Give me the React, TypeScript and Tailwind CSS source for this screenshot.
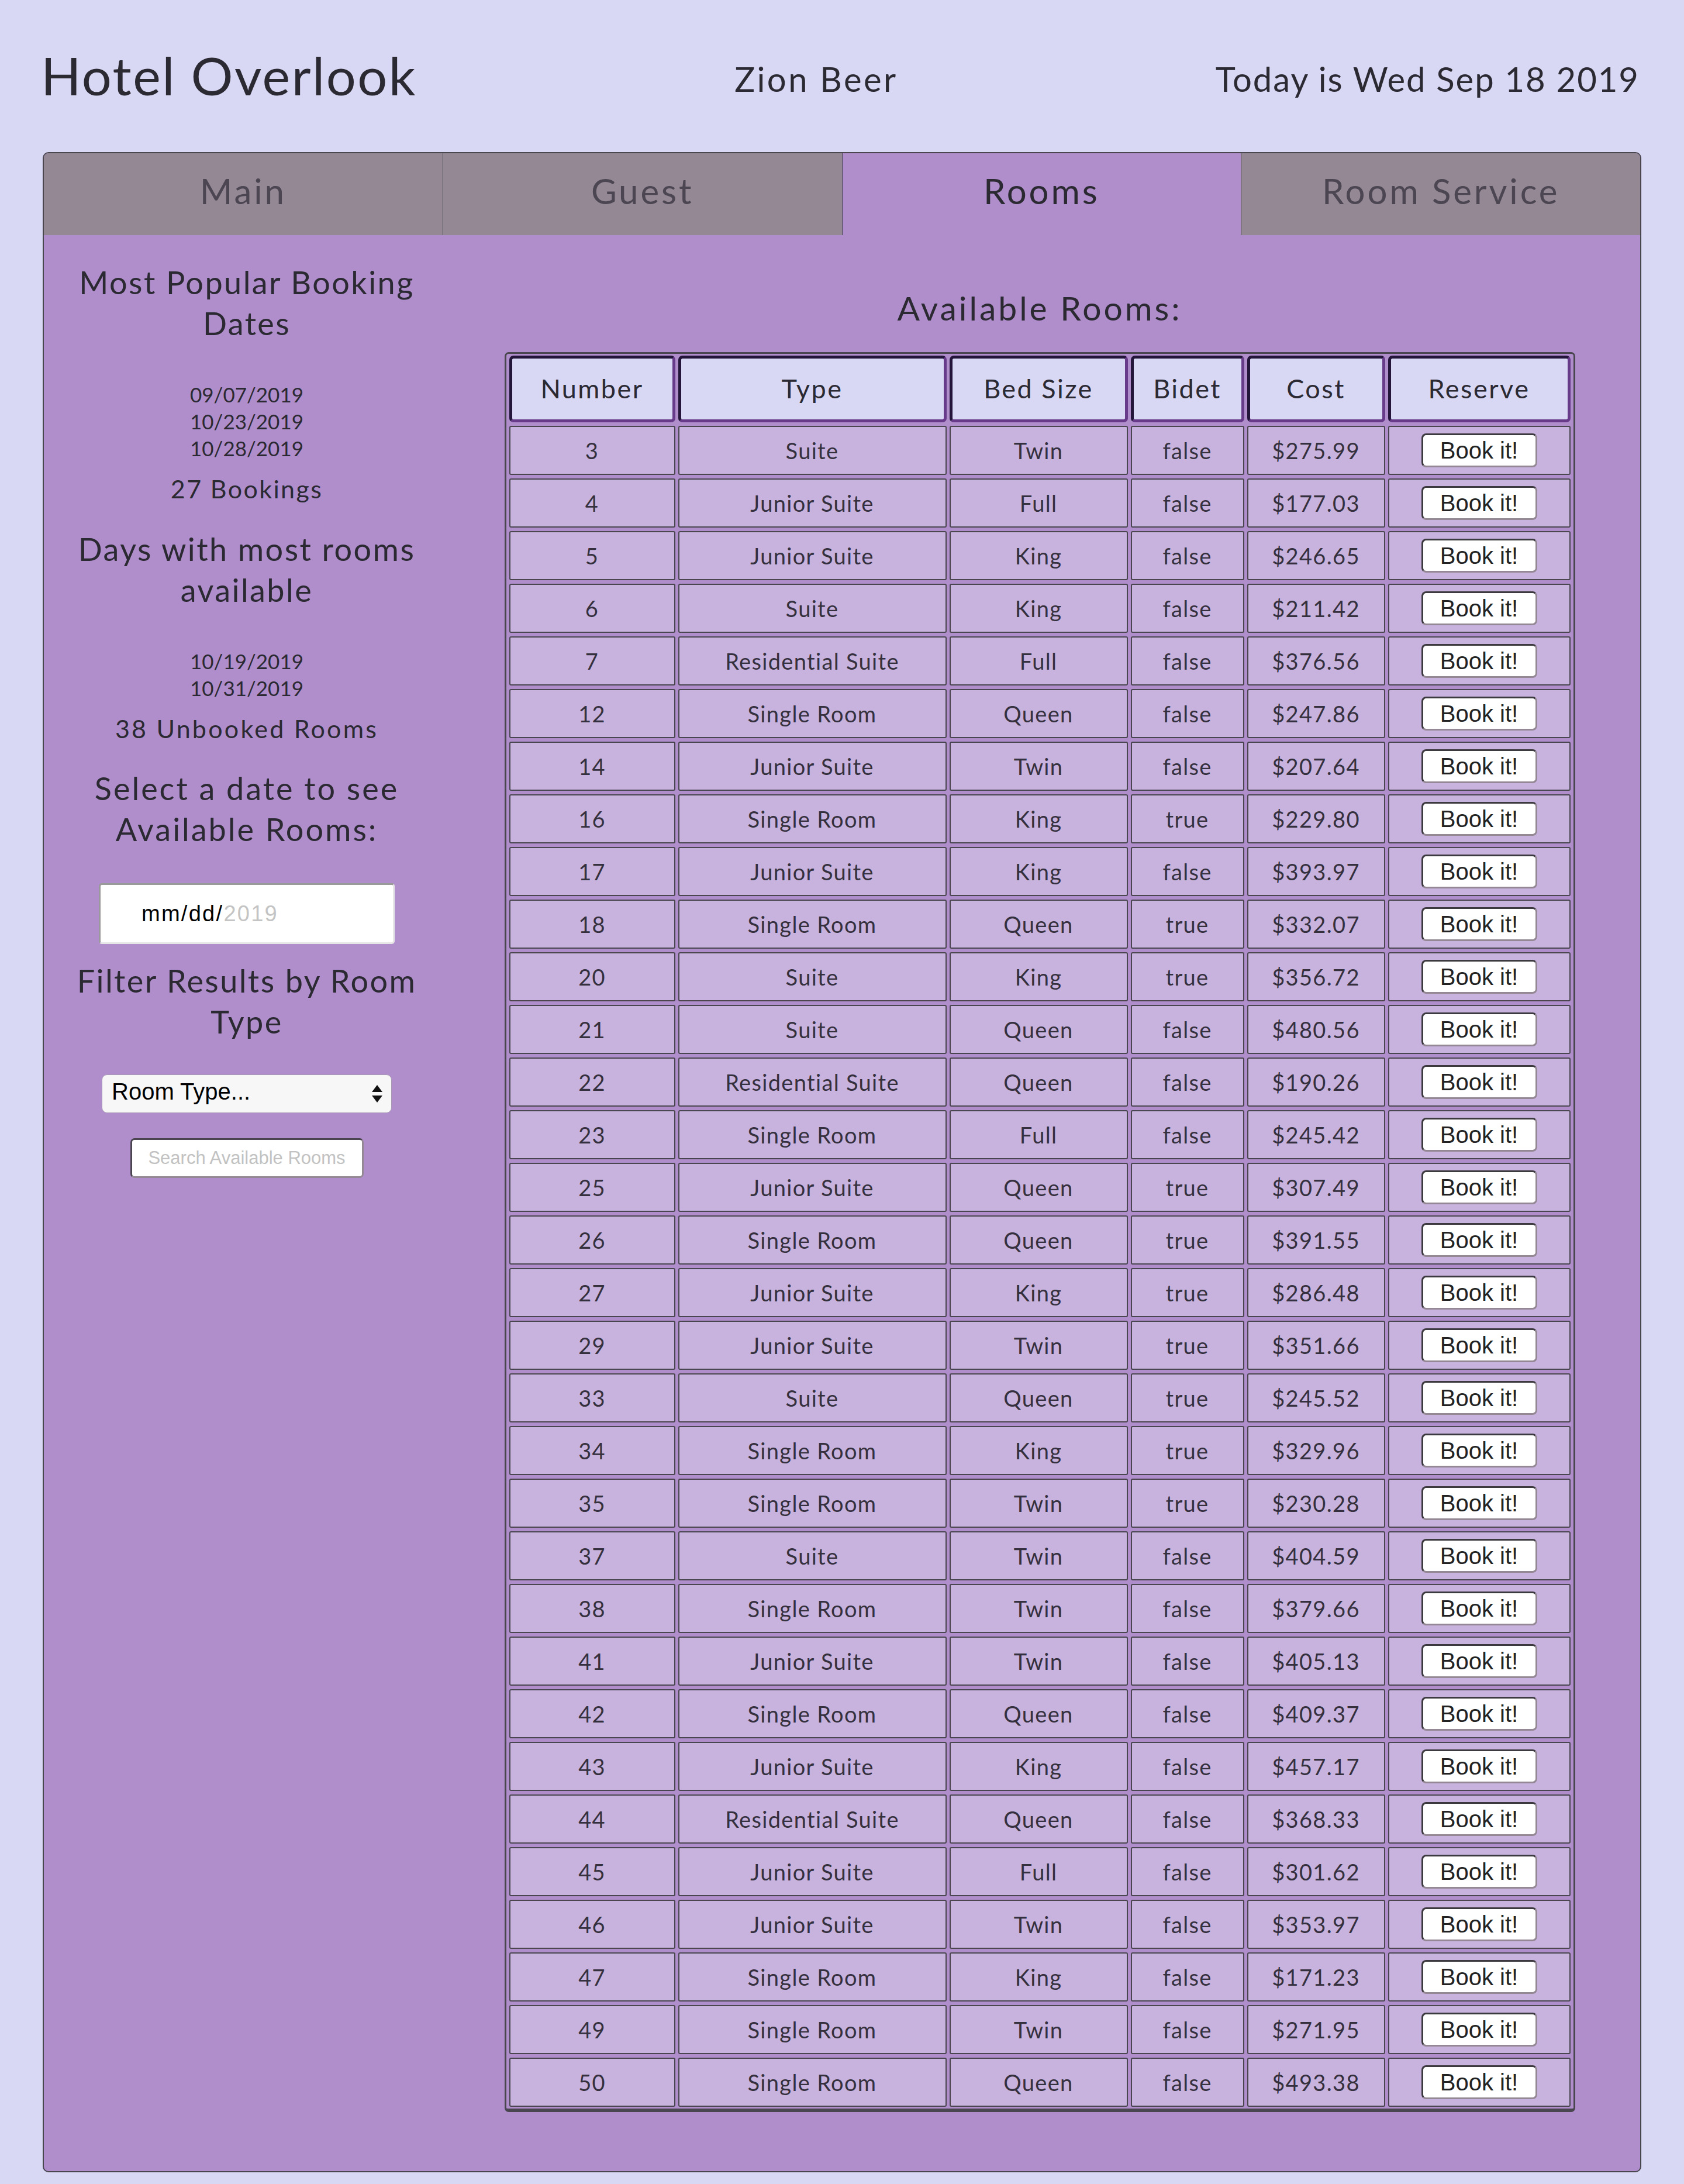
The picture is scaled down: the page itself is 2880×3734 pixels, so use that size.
const rooms = [
  [3, "Suite", "Twin", false, 275.99],
  [4, "Junior Suite", "Full", false, 177.03],
  [5, "Junior Suite", "King", false, 246.65],
  [6, "Suite", "King", false, 211.42],
  [7, "Residential Suite", "Full", false, 376.56],
  [12, "Single Room", "Queen", false, 247.86],
  [14, "Junior Suite", "Twin", false, 207.64],
  [16, "Single Room", "King", true, 229.8],
  [17, "Junior Suite", "King", false, 393.97],
  [18, "Single Room", "Queen", true, 332.07],
  [20, "Suite", "King", true, 356.72],
  [21, "Suite", "Queen", false, 480.56],
  [22, "Residential Suite", "Queen", false, 190.26],
  [23, "Single Room", "Full", false, 245.42],
  [25, "Junior Suite", "Queen", true, 307.49],
  [26, "Single Room", "Queen", true, 391.55],
  [27, "Junior Suite", "King", true, 286.48],
  [29, "Junior Suite", "Twin", true, 351.66],
  [33, "Suite", "Queen", true, 245.52],
  [34, "Single Room", "King", true, 329.96],
  [35, "Single Room", "Twin", true, 230.28],
  [37, "Suite", "Twin", false, 404.59],
  [38, "Single Room", "Twin", false, 379.66],
  [41, "Junior Suite", "Twin", false, 405.13],
  [42, "Single Room", "Queen", false, 409.37],
  [43, "Junior Suite", "King", false, 457.17],
  [44, "Residential Suite", "Queen", false, 368.33],
  [45, "Junior Suite", "Full", false, 301.62],
  [46, "Junior Suite", "Twin", false, 353.97],
  [47, "Single Room", "King", false, 171.23],
  [49, "Single Room", "Twin", false, 271.95],
  [50, "Single Room", "Queen", false, 493.38],
] as const;

const tabs = ["Main", "Guest", "Rooms", "Room Service"];
const headers = ["Number", "Type", "Bed Size", "Bidet", "Cost", "Reserve"];
const colWidths = ["w-[284px]", "w-[459px]", "w-[305px]", "w-[194px]", "w-[236px]", "w-[312px]"];

const tdClass =
  "h-[84px] border-2 border-[#4a4650] rounded-[3px] bg-[#c8b2de] text-center align-middle text-[38px] tracking-[0.035em] text-[#35303d] p-0";

export default function App() {
  return (
    <div className="min-h-screen bg-[#d8d8f5] text-[#2b2932] font-[Lato,sans-serif] pb-[22px]">
      <header className="h-[260px] flex items-center justify-between pl-[70px] pr-[76px]">
        <h1 className="text-[90px] leading-none tracking-[0.028em] pb-[4px]">Hotel Overlook</h1>
        <p className="text-[58px] leading-none tracking-[0.06em] pt-[10px]">Zion Beer</p>
        <p className="text-[58px] leading-none tracking-[0.034em] pt-[10px]">Today is Wed Sep 18 2019</p>
      </header>

      <main className="mx-[73px] border-2 border-[#4a4650] rounded-[10px] bg-[#b08ecc] overflow-hidden">
        <nav className="flex h-[140px]">
          {tabs.map((t, i) => (
            <div
              key={t}
              className={`flex-1 flex items-center justify-center pb-[12px] text-[60px] tracking-[0.065em] ${
                i > 0 ? "border-l border-[#4a4650]" : ""
              } ${t === "Rooms" ? "bg-[#b08ecc] text-[#2b2932]" : "bg-[#958895] text-[#4b4652]"}`}
            >
              {t}
            </div>
          ))}
        </nav>

        <div className="flex pb-[101px]">
          <aside className="w-[694px] shrink-0 flex flex-col items-center text-center">
            <h3 className="mt-[46px] text-[54px] leading-[70px] tracking-[0.045em]">
              Most Popular Booking
              <br />
              Dates
            </h3>
            <div className="mt-[63px] text-[35px] leading-[46px]">
              <p>09/07/2019</p>
              <p>10/23/2019</p>
              <p>10/28/2019</p>
            </div>
            <p className="mt-[21px] text-[43px] leading-[52px] tracking-[0.055em]">27 Bookings</p>

            <h3 className="mt-[42px] text-[54px] leading-[70px] tracking-[0.045em]">
              Days with most rooms
              <br />
              available
            </h3>
            <div className="mt-[63px] text-[35px] leading-[46px]">
              <p>10/19/2019</p>
              <p>10/31/2019</p>
            </div>
            <p className="mt-[21px] text-[43px] leading-[52px] tracking-[0.075em]">38 Unbooked Rooms</p>

            <h3 className="mt-[41px] text-[54px] leading-[70px] tracking-[0.055em]">
              Select a date to see
              <br />
              Available Rooms:
            </h3>
            <div className="mt-[57px] w-[506px] h-[104px] bg-white rounded-[5px] border-[3px] border-t-[#9a9a9a] border-l-[#9a9a9a] border-r-[#e6e6e6] border-b-[#e6e6e6] flex items-center pl-[70px] font-['Liberation_Sans',Arial,sans-serif] text-[38px] tracking-[0.06em] text-black">
              <span>mm/dd/</span>
              <span className="text-[#c4c4c4]">2019</span>
            </div>

            <h3 className="mt-[28px] text-[54px] leading-[70px] tracking-[0.045em]">
              Filter Results by Room
              <br />
              Type
            </h3>
            <div className="mt-[55px] w-[496px] h-[66px] bg-[#f7f7f7] border border-[#a99ab4] rounded-[9px] flex items-center justify-between pl-[16px] pr-[14px] font-['Liberation_Sans',Arial,sans-serif] text-[40px] text-black">
              <span className="-mt-[8px]">Room Type...</span>
              <svg width="20" height="34" viewBox="0 0 20 34">
                <path d="M10 2 L19 14 L1 14 Z" fill="#111" />
                <path d="M10 32 L19 20 L1 20 Z" fill="#111" />
              </svg>
            </div>
            <div className="mt-[43px] w-[399px] h-[68px] bg-white rounded-[7px] border-[3px] border-t-[#4a4550] border-l-[#4a4550] border-r-[#958895] border-b-[#958895] flex items-center justify-center font-['Liberation_Sans',Arial,sans-serif] text-[31px] text-[#c2c2c2]">
              Search Available Rooms
            </div>
          </aside>

          <section className="flex-1 flex flex-col items-center pr-[18px]">
            <h2 className="mt-[90px] text-[57px] leading-[68px] tracking-[0.07em]">Available Rooms:</h2>
            <div className="mt-[42px] border-[3px] border-b-[6px] border-[#4a4650] rounded-[7px]">
              <table className="table-fixed border-separate border-spacing-x-[5px] border-spacing-y-[6px] -my-[3px]">
                <thead>
                  <tr>
                    {headers.map((h, i) => (
                      <th
                        key={h}
                        className={`${colWidths[i]} h-[114px] p-0 font-normal text-[45px] tracking-[0.055em] text-[#2b2932] bg-[#d8d8f5] rounded-[7px] border-[5px] border-t-[#23163a] border-l-[#23163a] border-b-[#673a8a] border-r-[#673a8a]`}
                      >
                        {h}
                      </th>
                    ))}
                  </tr>
                </thead>
                <tbody>
                  {rooms.map(([num, type, bed, bidet, cost]) => (
                    <tr key={num}>
                      <td className={tdClass}>{num}</td>
                      <td className={tdClass}>{type}</td>
                      <td className={tdClass}>{bed}</td>
                      <td className={tdClass}>{bidet ? "true" : "false"}</td>
                      <td className={tdClass}>${cost.toFixed(2)}</td>
                      <td className={tdClass}>
                        <button className="w-[198px] h-[58px] -mt-[6px] bg-white rounded-[8px] border-[3px] border-t-[#3c393f] border-l-[#3c393f] border-r-[#958895] border-b-[#958895] font-['Liberation_Sans',Arial,sans-serif] text-[40px] tracking-normal leading-none text-[#222]">
                          Book it!
                        </button>
                      </td>
                    </tr>
                  ))}
                </tbody>
              </table>
            </div>
          </section>
        </div>
      </main>
    </div>
  );
}
